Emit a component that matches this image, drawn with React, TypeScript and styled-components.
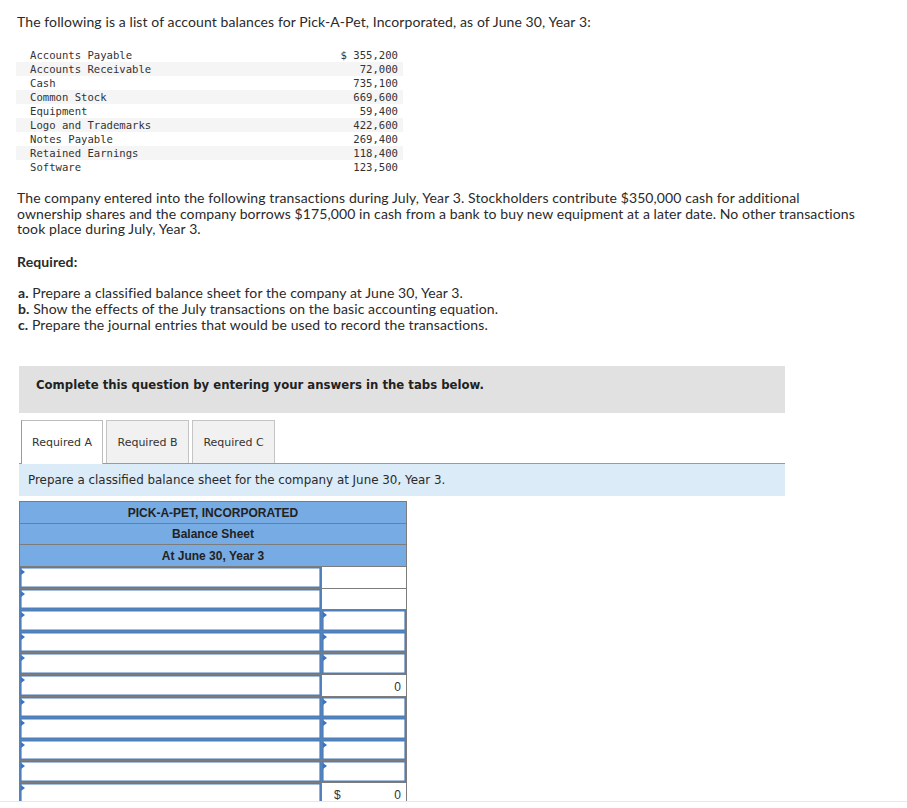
import React from "react";
import styled, { createGlobalStyle, css } from "styled-components";

const Global = createGlobalStyle`
  html, body { margin: 0; padding: 0; background: #fff; }
  body { font-family: Lato, "Open Sans", sans-serif; color: #2a2a2a; }
`;

const Page = styled.div`
  height: 802px;
  overflow: hidden;
  border-bottom: 1px solid #e8e8e8;
  padding: 14px 0 0 17px;
  box-sizing: border-box;
`;

const Text = styled.p`
  margin: 0;
  font-size: 14px;
  letter-spacing: 0.1px;
  line-height: 16px;
`;

const Intro = styled(Text)``;

const AccountTable = styled.div`
  margin: 18px 0 0 -1px;
  width: 387px;
  font-family: "DejaVu Sans Mono", "Liberation Mono", monospace;
  font-size: 10.6px;
  color: #333;
`;

const AccountRow = styled.div<{ $shade: boolean }>`
  display: flex;
  justify-content: space-between;
  height: 14px;
  line-height: 14px;
  padding: 0 5px 0 14px;
  background: ${(p) => (p.$shade ? "#f5f5f5" : "transparent")};
  white-space: pre;
`;

const Para = styled(Text)`
  margin-top: 16px;
  line-height: 15.5px;
  width: 843px;
`;

const RequiredHead = styled(Text)`
  margin-top: 17.5px;
  font-weight: 700;
`;

const ReqList = styled.div`
  margin-top: 15px;
  padding-left: 1px;
`;

const ReqItem = styled(Text)`
  b { font-weight: 700; }
`;

const Notice = styled.div`
  margin: 33px 0 0 2px;
  width: 766px;
  height: 47px;
  box-sizing: border-box;
  background: #e1e1e1;
  padding: 11px 17px 0;
  font-family: "DejaVu Sans", sans-serif;
  font-weight: 700;
  font-size: 11.7px;
  line-height: 16px;
  color: #222;
`;

const Tabs = styled.div`
  margin: 7px 0 0 2px;
  width: 766px;
  display: flex;
  align-items: flex-end;
  gap: 3px;
  padding-left: 2px;
  box-sizing: border-box;
  border-bottom: 1px solid #9a9a9a;
  height: 44px;
`;

const Tab = styled.div<{ $active?: boolean }>`
  width: 83px;
  height: 43px;
  box-sizing: border-box;
  display: flex;
  align-items: center;
  justify-content: center;
  font-family: "DejaVu Sans", sans-serif;
  font-size: 11px;
  color: #333;
  border: 1px solid #c4c4c4;
  border-bottom: none;
  background: #f1f1f1;
  ${(p) =>
    p.$active &&
    css`
      width: 82px;
      height: 44px;
      margin-bottom: -1px;
      background: #fff;
      border-color: #bdbdbd;
      border-left-color: #9a9a9a;
    `}
`;

const InfoBand = styled.div`
  margin-left: 2px;
  width: 766px;
  height: 32px;
  box-sizing: border-box;
  background: #dbebf8;
  padding-left: 9px;
  display: flex;
  align-items: center;
  font-family: "DejaVu Sans", sans-serif;
  font-size: 11.9px;
  color: #2a2a2a;
`;

const Sheet = styled.table`
  margin: 5px 0 0 2px;
  width: 387px;
  border-collapse: collapse;
  table-layout: fixed;
  font-family: "Liberation Sans", Arial, sans-serif;
`;

const HeadCell = styled.td<{ $h: number }>`
  height: ${(p) => p.$h}px;
  padding: 0;
  border: 1px solid #7c7c7c;
  background: #77abe3;
  text-align: center;
  font-size: 12px;
  color: #222;
  font-weight: 700;
`;

const Cell = styled.td<{ $total?: boolean }>`
  padding: 0;
  height: 20.6px;
  border: 1px solid #7c7c7c;
  background: #fff;
  ${(p) =>
    p.$total &&
    css`
      border-top: 1px solid #000;
    `}
`;

const Input = styled.div`
  position: relative;
  height: 20.6px;
  box-sizing: border-box;
  border: 1px solid #4f7fba;
  box-shadow: inset 0 0 0 0.6px #4f7fba;
  &::before {
    content: "";
    position: absolute;
    left: 0;
    top: 1px;
    border-top: 3px solid transparent;
    border-bottom: 3px solid transparent;
    border-left: 4px solid #3b73c6;
  }
`;

const Total = styled.div`
  height: 20.6px;
  display: flex;
  align-items: center;
  justify-content: space-between;
  padding: 4px 5px 0 12px;
  box-sizing: border-box;
  font-size: 12px;
  color: #333;
`;

const accounts: [string, string][] = [
  ["Accounts Payable", "$ 355,200"],
  ["Accounts Receivable", "72,000"],
  ["Cash", "735,100"],
  ["Common Stock", "669,600"],
  ["Equipment", "59,400"],
  ["Logo and Trademarks", "422,600"],
  ["Notes Payable", "269,400"],
  ["Retained Earnings", "118,400"],
  ["Software", "123,500"],
];

type Right = "blank" | "input" | "total" | "grand";
const rows: Right[] = [
  "blank",
  "blank",
  "input",
  "input",
  "input",
  "total",
  "input",
  "input",
  "input",
  "input",
  "grand",
];

export default function App() {
  return (
    <>
      <Global />
      <Page>
        <Intro>
          The following is a list of account balances for Pick-A-Pet, Incorporated, as of June 30, Year 3:
        </Intro>
        <AccountTable>
          {accounts.map(([name, val], i) => (
            <AccountRow key={name} $shade={i % 2 === 1}>
              <span>{name}</span>
              <span>{val}</span>
            </AccountRow>
          ))}
        </AccountTable>
        <Para>
          The company entered into the following transactions during July, Year 3. Stockholders contribute $350,000 cash for additional ownership shares and the company borrows $175,000 in cash from a bank to buy new equipment at a later date. No other transactions took place during July, Year 3.
        </Para>
        <RequiredHead>Required:</RequiredHead>
        <ReqList>
          <ReqItem>
            <b>a.</b> Prepare a classified balance sheet for the company at June 30, Year 3.
          </ReqItem>
          <ReqItem>
            <b>b.</b> Show the effects of the July transactions on the basic accounting equation.
          </ReqItem>
          <ReqItem>
            <b>c.</b> Prepare the journal entries that would be used to record the transactions.
          </ReqItem>
        </ReqList>
        <Notice>Complete this question by entering your answers in the tabs below.</Notice>
        <Tabs>
          <Tab $active>Required A</Tab>
          <Tab>Required B</Tab>
          <Tab>Required C</Tab>
        </Tabs>
        <InfoBand>Prepare a classified balance sheet for the company at June 30, Year 3.</InfoBand>
        <Sheet>
          <colgroup>
            <col style={{ width: 302 }} />
            <col style={{ width: 85 }} />
          </colgroup>
          <tbody>
            <tr>
              <HeadCell colSpan={2} $h={21}>PICK-A-PET, INCORPORATED</HeadCell>
            </tr>
            <tr>
              <HeadCell colSpan={2} $h={20}>Balance Sheet</HeadCell>
            </tr>
            <tr>
              <HeadCell colSpan={2} $h={21}>At June 30, Year 3</HeadCell>
            </tr>
            {rows.map((r, i) => (
              <tr key={i}>
                <Cell>
                  <Input />
                </Cell>
                <Cell $total={r === "total" || r === "grand"}>
                  {r === "input" && <Input />}
                  {r === "total" && (
                    <Total>
                      <span />
                      <span>0</span>
                    </Total>
                  )}
                  {r === "grand" && (
                    <Total>
                      <span>$</span>
                      <span>0</span>
                    </Total>
                  )}
                </Cell>
              </tr>
            ))}
          </tbody>
        </Sheet>
      </Page>
    </>
  );
}
